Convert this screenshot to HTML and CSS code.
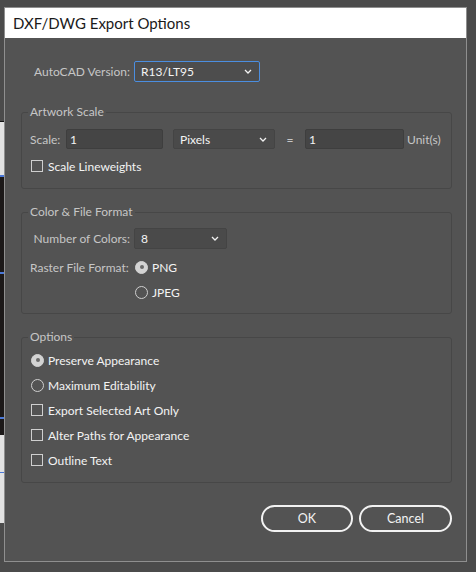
FILE: index.html
```html
<!DOCTYPE html>
<html>
<head>
<meta charset="utf-8">
<link rel="stylesheet" href="styles.css">
</head>
<body>
<div class="page">
  <div class="behind"></div>
  <div class="dialog">
    <div class="titlebar">DXF/DWG Export Options</div>
    <div class="content">
      <div class="version-row">
        <span class="label label-version">AutoCAD Version:</span>
        <div class="select select-focused select-version">
          <span class="value">R13/LT95</span>
          <svg class="chev" width="8" height="5" viewBox="0 0 8 5"><path d="M1 1l3 3 3-3" fill="none" stroke="#f2f2f2" stroke-width="1.3"/></svg>
        </div>
      </div>

      <fieldset class="group group-scale">
        <legend>Artwork Scale</legend>
        <div class="row">
          <span class="label label-scale">Scale:</span>
          <div class="field field-scale"><span class="value">1</span></div>
          <div class="select select-pixels">
            <span class="value">Pixels</span>
            <svg class="chev" width="8" height="5" viewBox="0 0 8 5"><path d="M1 1l3 3 3-3" fill="none" stroke="#f2f2f2" stroke-width="1.3"/></svg>
          </div>
          <span class="eq">=</span>
          <div class="field field-units"><span class="value">1</span></div>
          <span class="label label-units">Unit(s)</span>
        </div>
        <div class="row opt">
          <span class="checkbox"></span>
          <span class="opt-text">Scale Lineweights</span>
        </div>
      </fieldset>

      <fieldset class="group group-color">
        <legend>Color &amp; File Format</legend>
        <div class="row row-colors">
          <span class="label label-colors">Number of Colors:</span>
          <div class="select select-colors">
            <span class="value">8</span>
            <svg class="chev" width="8" height="5" viewBox="0 0 8 5"><path d="M1 1l3 3 3-3" fill="none" stroke="#f2f2f2" stroke-width="1.3"/></svg>
          </div>
        </div>
        <div class="row row-raster">
          <span class="label label-raster">Raster File Format:</span>
          <span class="radio radio-on"></span>
          <span class="opt-text">PNG</span>
        </div>
        <div class="row row-jpeg">
          <span class="radio"></span>
          <span class="opt-text">JPEG</span>
        </div>
      </fieldset>

      <fieldset class="group group-options">
        <legend>Options</legend>
        <div class="row opt"><span class="radio radio-on"></span><span class="opt-text">Preserve Appearance</span></div>
        <div class="row opt"><span class="radio"></span><span class="opt-text">Maximum Editability</span></div>
        <div class="row opt"><span class="checkbox"></span><span class="opt-text">Export Selected Art Only</span></div>
        <div class="row opt"><span class="checkbox"></span><span class="opt-text">Alter Paths for Appearance</span></div>
        <div class="row opt"><span class="checkbox"></span><span class="opt-text">Outline Text</span></div>
      </fieldset>

      <div class="buttons">
        <button class="btn btn-ok">OK</button>
        <button class="btn btn-cancel">Cancel</button>
      </div>
    </div>
  </div>
</div>
</body>
</html>
```

FILE: styles.css
```css
html, body {
  margin: 0;
  padding: 0;
}
body {
  width: 476px;
  height: 572px;
  overflow: hidden;
  background: #4b4b4b;
  font-family: "Lato", "Liberation Sans", sans-serif;
  font-size: 12px;
  color: #f2f2f2;
}
.page {
  display: flex;
  align-items: flex-start;
}
.behind {
  width: 4px;
  height: 572px;
  flex: none;
  background: linear-gradient(to bottom,
    #4b4b4b 0 121px,
    #111111 121px 122px,
    #e2e2e2 122px 175px,
    #4a78d8 175px 177px,
    #1c1919 177px 272px,
    #4a78d8 272px 274px,
    #1c1919 274px 417px,
    #4a78d8 417px 419px,
    #1c1919 419px 435px,
    #e2e2e2 435px 472px,
    #4a78d8 472px 473px,
    #e2e2e2 473px 523px,
    #4b4b4b 523px);
}
.dialog {
  margin-top: 7px;
  width: 463px;
  height: 555px;
  box-sizing: border-box;
  border: 1px solid #8f8f8f;
  background: #535353;
  display: flex;
  flex-direction: column;
  flex: none;
}
.titlebar {
  height: 30px;
  line-height: 30px;
  background: #ffffff;
  color: #1a1a1a;
  font-size: 15px;
  padding-left: 8px;
}
.content {
  padding: 0 14px 0 16px;
  display: flex;
  flex-direction: column;
}
.label {
  color: #c6c6c6;
  white-space: nowrap;
}
.value {
  color: #f4f4f4;
}
.version-row {
  margin-top: 23px;
  display: flex;
  align-items: center;
  gap: 4px;
  height: 21px;
}
.label-version {
  width: 109px;
  text-align: right;
}
.select {
  box-sizing: border-box;
  display: flex;
  align-items: center;
  justify-content: space-between;
  height: 20px;
  padding: 0 7px 0 6px;
  background: #4a4a4a;
  border: 1px solid #444444;
  border-radius: 2px;
}
.select-focused {
  border-color: #4b8ee0;
  background: #4d4d4d;
  height: 21px;
}
.select-version {
  width: 126px;
}
.chev {
  display: block;
  flex: none;
}
.group {
  margin: 0;
  padding: 10px 8px 12px 8px;
  border: 1px solid #474747;
  border-radius: 3px;
  min-inline-size: auto;
  display: flex;
  flex-direction: column;
}
.group legend {
  padding: 0 2px;
  margin-left: -2px;
  line-height: 14px;
  height: 14px;
  color: #c6c6c6;
}
.group-scale {
  margin-top: 23px;
  gap: 7px;
}
.group-color {
  margin-top: 16px;
  padding-top: 9px;
  padding-bottom: 11px;
}
.group-options {
  margin-top: 16px;
  padding-top: 6px;
  gap: 5px;
}
.row {
  display: flex;
  align-items: center;
  height: 20px;
}
.label-scale {
  width: 32px;
}
.field {
  box-sizing: border-box;
  height: 20px;
  background: #454545;
  border: 1px solid #3e3e3e;
  border-radius: 2px;
  padding-left: 3px;
  display: flex;
  align-items: center;
}
.field-scale {
  margin-left: 4px;
  width: 97px;
}
.select-pixels {
  margin-left: 10px;
  width: 102px;
}
.eq {
  width: 30px;
  text-align: center;
  color: #c6c6c6;
}
.field-units {
  width: 99px;
}
.label-units {
  margin-left: 3px;
}
.opt {
  padding-left: 1px;
}
.opt-text {
  color: #f4f4f4;
  white-space: nowrap;
}
.checkbox {
  box-sizing: border-box;
  width: 12px;
  height: 12px;
  border: 1px solid #cfcfcf;
  margin-right: 5px;
  flex: none;
}
.radio {
  box-sizing: border-box;
  width: 13px;
  height: 13px;
  border: 1px solid #cfcfcf;
  border-radius: 50%;
  margin-right: 4px;
  flex: none;
  display: flex;
  align-items: center;
  justify-content: center;
}
.radio-on {
  background: #d3d3d3;
  border-color: #d3d3d3;
}
.radio-on::after {
  content: "";
  width: 4px;
  height: 4px;
  border-radius: 50%;
  background: #6a6a6a;
}
.row-colors {
  height: 21px;
  gap: 4px;
}
.label-colors {
  width: 100px;
  text-align: right;
}
.select-colors {
  width: 93px;
  height: 21px;
}
.row-raster {
  margin-top: 8px;
}
.label-raster {
  width: 105px;
}
.row-jpeg {
  margin-top: 5px;
  padding-left: 105px;
}
.buttons {
  margin-top: 22px;
  display: flex;
  justify-content: flex-end;
  gap: 6px;
}
.btn {
  box-sizing: border-box;
  height: 27px;
  border: 2px solid #f2f2f2;
  border-radius: 14px;
  background: transparent;
  color: #f4f4f4;
  font-family: "Lato", "Liberation Sans", sans-serif;
  font-size: 12.5px;
  padding: 0;
}
.btn-ok {
  width: 92px;
}
.btn-cancel {
  width: 93px;
}
```
